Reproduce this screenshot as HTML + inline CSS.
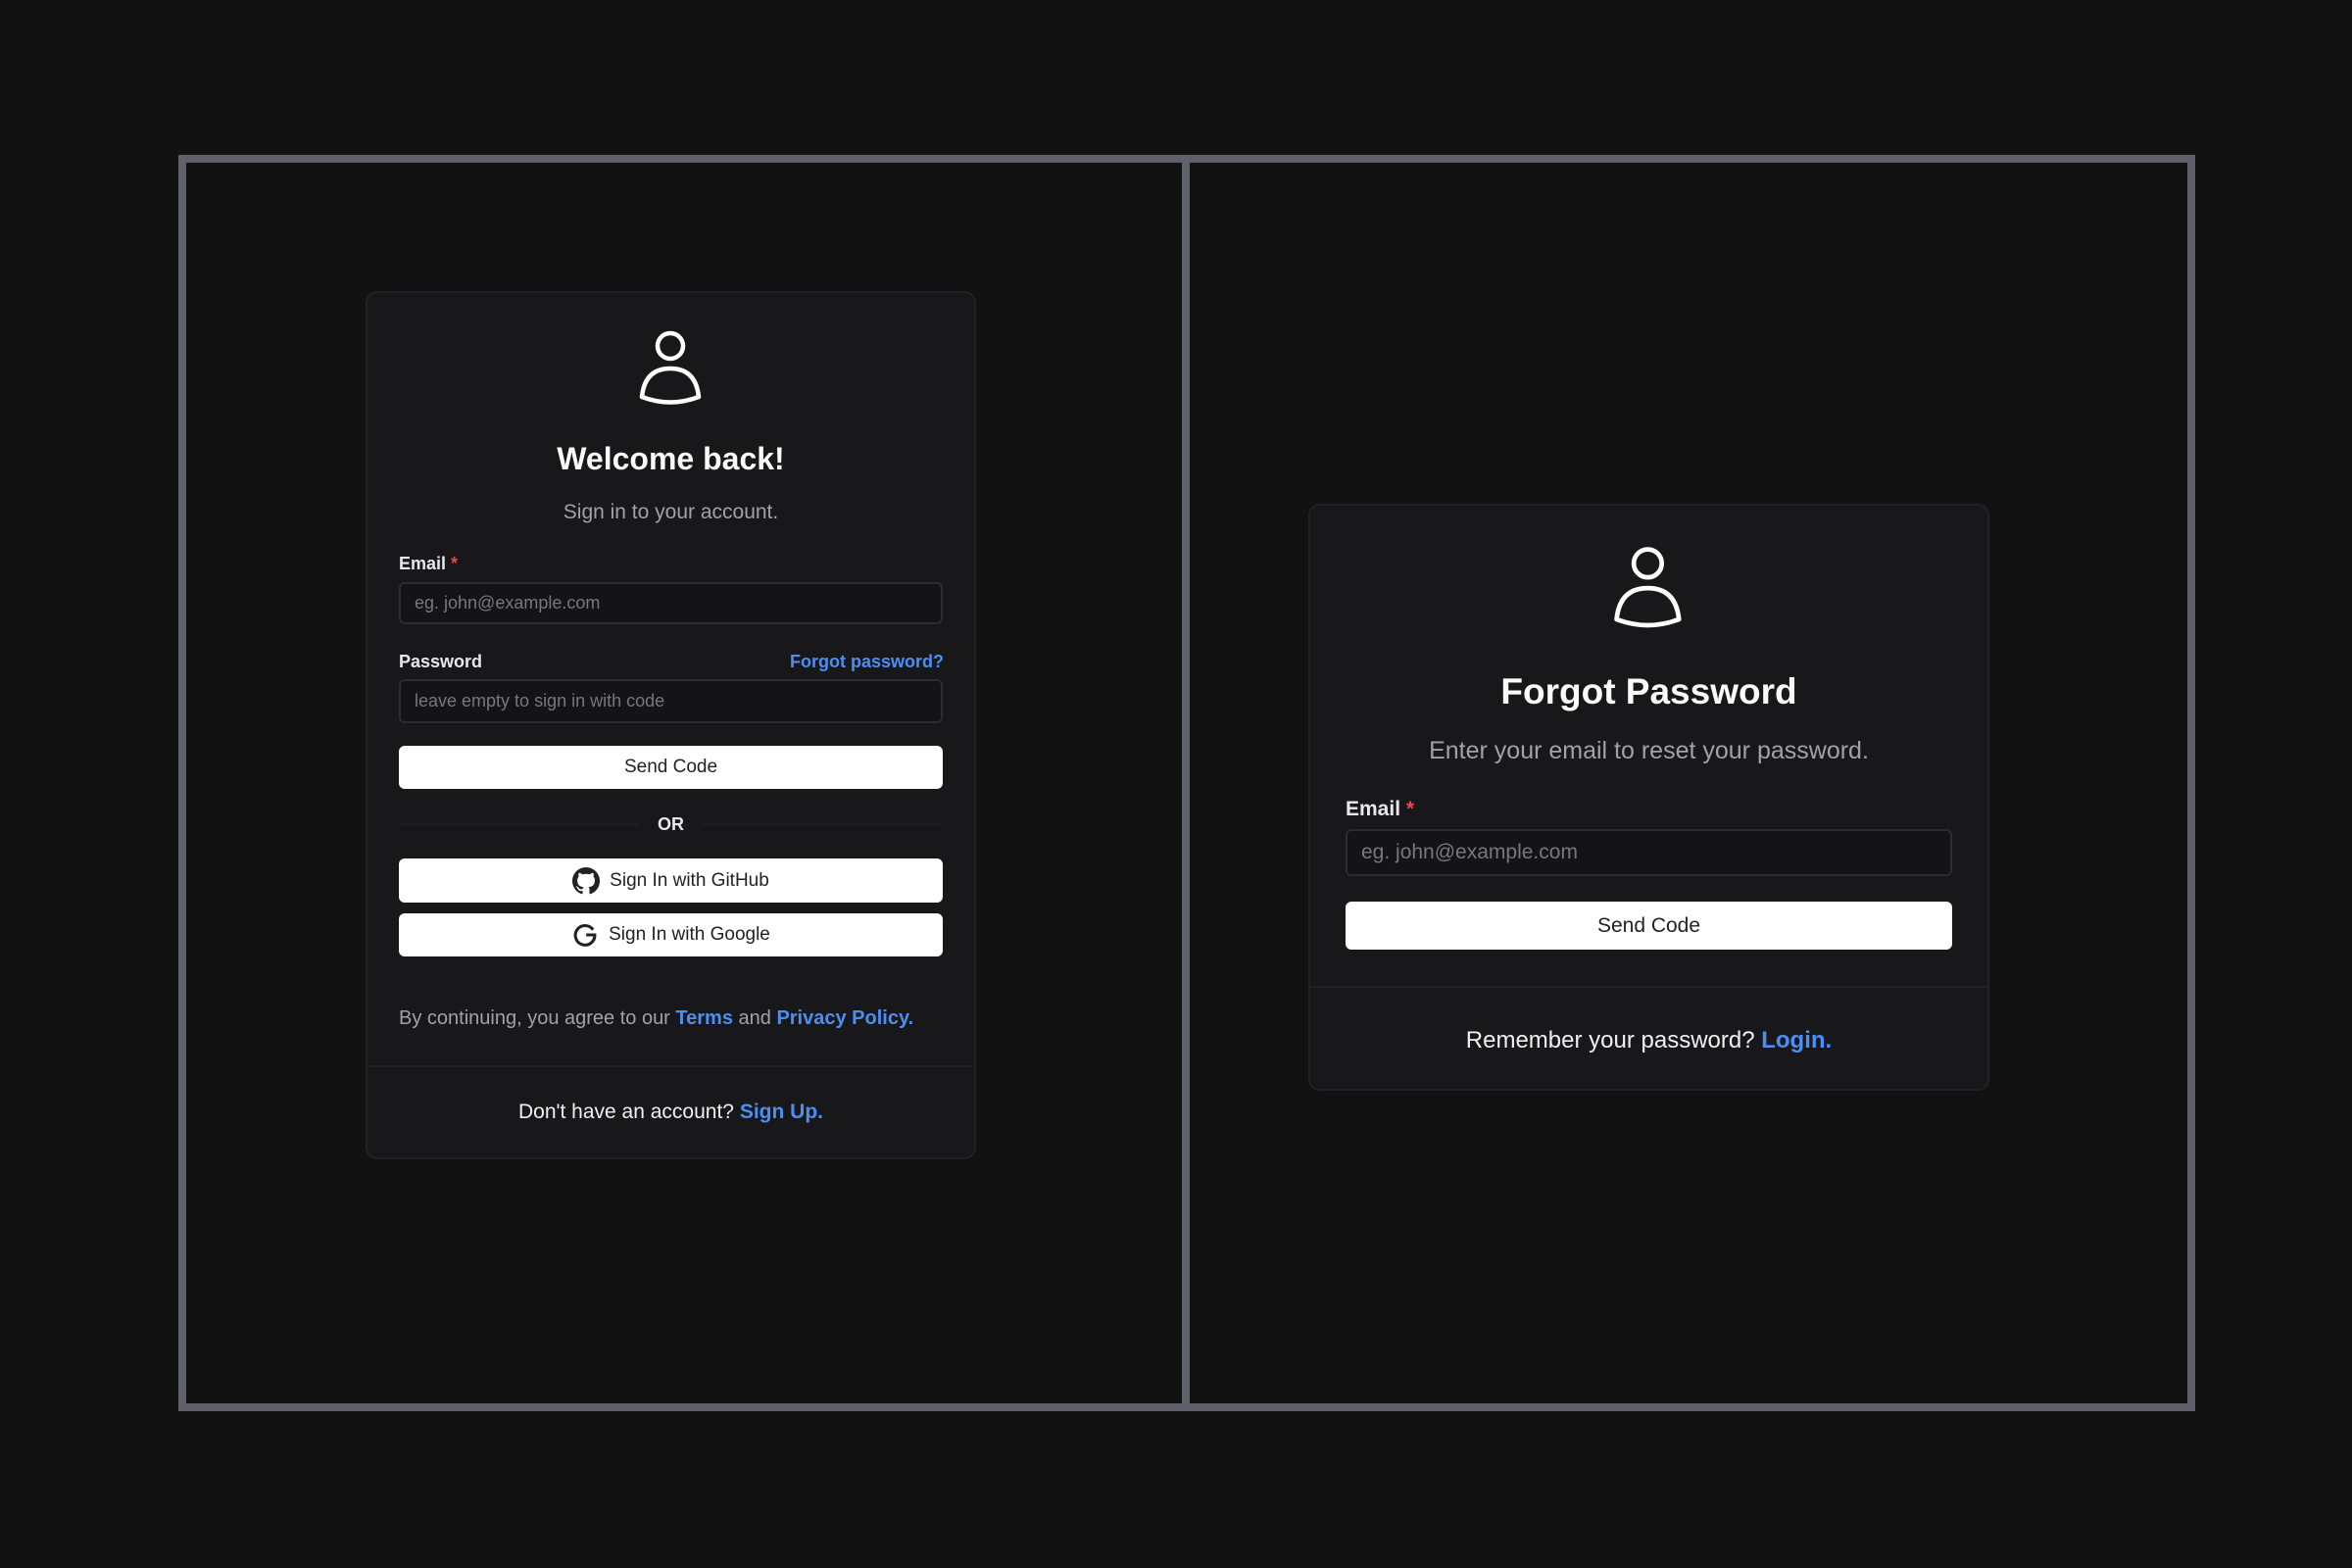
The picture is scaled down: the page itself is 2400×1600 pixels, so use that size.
<!DOCTYPE html>
<html><head><meta charset="utf-8"><style>
*{margin:0;padding:0;box-sizing:border-box}
body{width:2400px;height:1600px;background:#121212;font-family:"Liberation Sans",sans-serif;position:relative;overflow:hidden;color:#fafafa}
.a{position:absolute}
.frame{left:182px;top:158px;width:2058px;height:1282px;border:8px solid #5f606a}
.div{left:1206px;top:160px;width:8px;height:1278px;background:#5f606a}
.card{background:#18181b;border:2px solid #222226;border-radius:12px}
.c{text-align:center}
.lbl{font-weight:bold;font-size:18px;color:#e8e8e8}
.lbl span{color:#e5484d}
.inp{border:2px solid #2c2c31;border-radius:6px;background:#141416;color:#77777d;font-size:18px;display:flex;align-items:center;padding-left:14px}
.btn{background:#fff;border-radius:6px;color:#222;font-size:19px;display:flex;align-items:center;justify-content:center;gap:10px}
.link{color:#4c8ff2;font-weight:bold}
.hr{height:2px;background:#222226}
</style></head><body>
<div class="a frame"></div>
<div class="a div"></div>

<!-- left card -->
<div class="a card" style="left:373px;top:297px;width:623px;height:886px"></div>
<svg class="a" style="left:650px;top:334px" width="70" height="82" viewBox="0 0 70 82"><circle cx="34" cy="19" r="13" fill="none" stroke="#fff" stroke-width="4.5"/><path d="M5 71 Q8 42 34 42 Q60 42 63 71 Q34 82 5 71Z" fill="none" stroke="#fff" stroke-width="4.5" stroke-linejoin="round"/></svg>
<div class="a c" style="left:373px;width:623px;top:450px;font-size:32px;font-weight:bold">Welcome back!</div>
<div class="a c" style="left:373px;width:623px;top:511px;font-size:21px;color:#a1a1aa">Sign in to your account.</div>
<div class="a lbl" style="left:407px;top:565px">Email <span>*</span></div>
<div class="a inp" style="left:407px;top:594px;width:555px;height:43px">eg. john@example.com</div>
<div class="a lbl" style="left:407px;top:665px">Password</div>
<div class="a link" style="left:806px;top:665px;font-size:18px">Forgot password?</div>
<div class="a inp" style="left:407px;top:693px;width:555px;height:45px">leave empty to sign in with code</div>
<div class="a btn" style="left:407px;top:761px;width:555px;height:44px">Send Code</div>
<div class="a hr" style="left:407px;top:840px;width:245px;background:#1f1f23"></div>
<div class="a hr" style="left:717px;top:840px;width:245px;background:#1f1f23"></div>
<div class="a c" style="left:652px;width:65px;top:831px;font-size:18px;font-weight:bold;color:#e8e8e8">OR</div>
<div class="a btn" style="left:407px;top:876px;width:555px;height:45px">
<svg width="28" height="28" viewBox="0 0 16 16"><path fill="#222" d="M8 0C3.58 0 0 3.58 0 8c0 3.540 2.290 6.530 5.470 7.590.4.07.55-.17.55-.38 0-.19-.01-.82-.01-1.49-2.010.37-2.530-.49-2.690-.94-.09-.23-.48-.94-.82-1.13-.28-.15-.68-.52-.01-.53.63-.01 1.080.58 1.230.82.72 1.210 1.870.87 2.330.66.07-.52.28-.87.51-1.070-1.780-.2-3.640-.89-3.640-3.950 0-.87.31-1.590.82-2.150-.08-.2-.36-1.020.08-2.120 0 0 .67-.21 2.200.82.64-.18 1.320-.27 2-.27.68 0 1.360.09 2 .27 1.530-1.040 2.200-.82 2.200-.82.44 1.100.16 1.920.08 2.120.51.56.82 1.270.82 2.150 0 3.070-1.870 3.750-3.650 3.950.29.25.54.73.54 1.480 0 1.070-.01 1.930-.01 2.200 0 .21.15.46.55.38A8.013 8.013 0 0016 8c0-4.420-3.580-8-8-8z"/></svg>Sign In with GitHub</div>
<div class="a btn" style="left:407px;top:932px;width:555px;height:44px">
<svg width="28" height="28" viewBox="0 0 24 24"><path d="M19 7.5 A8.5 8.5 0 1 0 20.5 12 H13" fill="none" stroke="#222" stroke-width="2.6"/></svg>Sign In with Google</div>
<div class="a" style="left:407px;top:1028px;font-size:20px;color:#a1a1aa">By continuing, you agree to our <span class="link">Terms</span> and <span class="link">Privacy Policy.</span></div>
<div class="a hr" style="left:375px;top:1087px;width:619px"></div>
<div class="a c" style="left:373px;width:623px;top:1123px;font-size:21px;color:#f0f0f0">Don't have an account? <span class="link">Sign Up.</span></div>

<!-- right card -->
<div class="a card" style="left:1335px;top:514px;width:695px;height:599px"></div>
<svg class="a" style="left:1644px;top:554px" width="77" height="90" viewBox="0 0 70 82"><circle cx="34" cy="19" r="13" fill="none" stroke="#fff" stroke-width="4.3"/><path d="M5 71 Q8 42 34 42 Q60 42 63 71 Q34 82 5 71Z" fill="none" stroke="#fff" stroke-width="4.3" stroke-linejoin="round"/></svg>
<div class="a c" style="left:1335px;width:695px;top:685px;font-size:37px;font-weight:bold">Forgot Password</div>
<div class="a c" style="left:1335px;width:695px;top:752px;font-size:25px;color:#a1a1aa">Enter your email to reset your password.</div>
<div class="a lbl" style="left:1373px;top:814px;font-size:21px">Email <span>*</span></div>
<div class="a inp" style="left:1373px;top:846px;width:619px;height:48px;font-size:21px">eg. john@example.com</div>
<div class="a btn" style="left:1373px;top:920px;width:619px;height:49px;font-size:21px">Send Code</div>
<div class="a hr" style="left:1337px;top:1006px;width:691px"></div>
<div class="a c" style="left:1335px;width:695px;top:1048px;font-size:24px;color:#f0f0f0">Remember your password? <span class="link">Login.</span></div>
</body></html>
